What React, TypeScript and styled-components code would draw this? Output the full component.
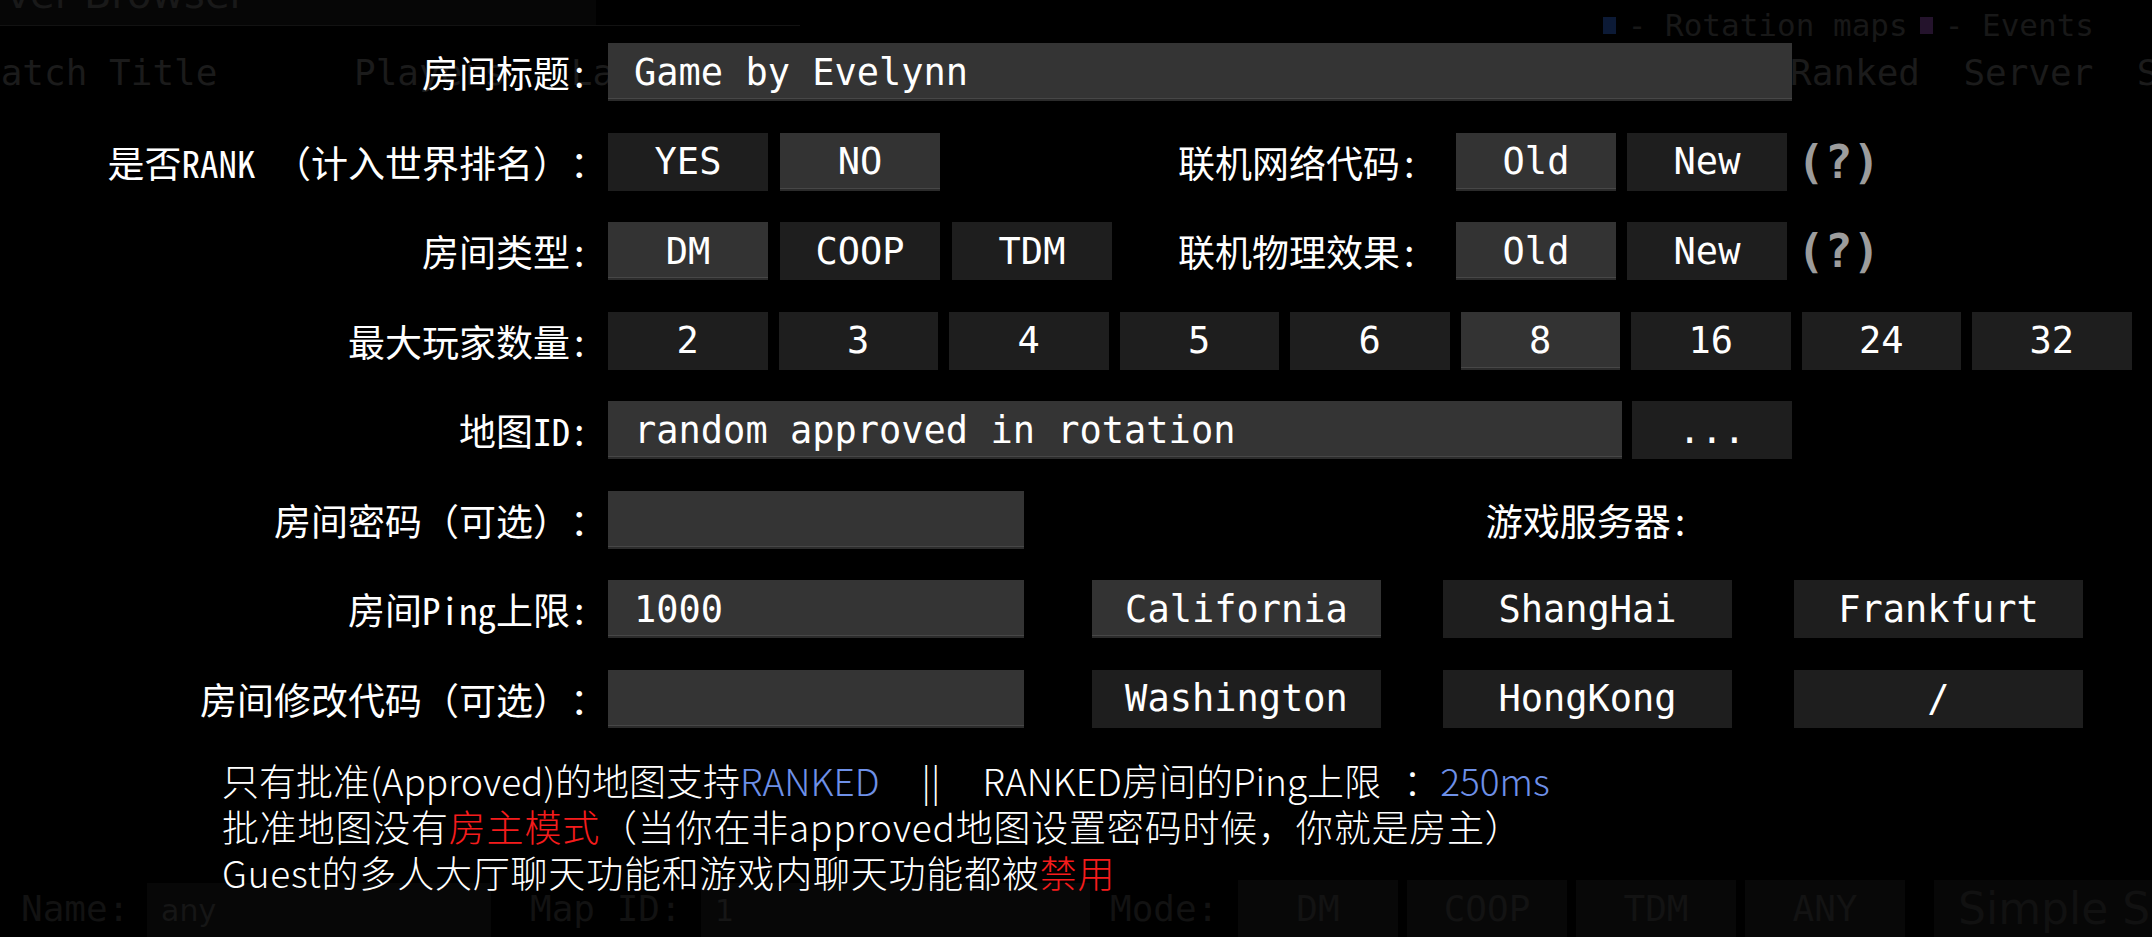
import React from 'react';
import styled, { createGlobalStyle } from 'styled-components';

const mono = `"DejaVu Sans Mono", "Liberation Mono", monospace`;
const cjk = `"Noto Sans CJK SC", "Noto Sans", sans-serif`;
const cjkMono = `"Noto Sans Mono CJK SC", "Noto Sans CJK SC", sans-serif`;
const sans = `"DejaVu Sans", "Noto Sans", sans-serif`;

const GlobalStyle = createGlobalStyle`
  html, body { margin: 0; padding: 0; background: #000; }
  body { width: 2152px; height: 937px; overflow: hidden; }
  #root { width: 2152px; height: 937px; }
`;

const Stage = styled.div`
  position: relative;
  width: 2152px;
  height: 937px;
  overflow: hidden;
  background: #000;
`;

/* ---------- dimmed page behind the dialog ---------- */
const BackPage = styled.div`
  height: 937px;
  display: flex;
  flex-direction: column;
  font-family: ${mono};
  color: #1a1a1a;
`;

const TopBar = styled.div`
  height: 50px;
  display: flex;
  justify-content: space-between;
`;

const TitleBlock = styled.div`
  width: 800px;
  display: flex;
  flex-direction: column;
`;

const TitleTab = styled.div`
  width: 596px;
  height: 25px;
  background: #060606;
  overflow: hidden;
  display: flex;
  align-items: flex-end;
`;

const TitleText = styled.span`
  font-family: ${sans};
  font-size: 40px;
  line-height: 40px;
  margin-bottom: 11px;
  margin-left: -60px;
  color: #191919;
  white-space: nowrap;
`;

const Rule = styled.div`
  height: 1px;
  background: #121212;
`;

const Legend = styled.div`
  display: flex;
  align-items: center;
  gap: 12px;
  margin-right: 58px;
  font-size: 31px;
  color: #181818;
  white-space: pre;
`;

const Swatch = styled.span<{ $c: string }>`
  width: 13px;
  height: 17px;
  background: ${(p) => p.$c};
`;

const HeaderRow = styled.div`
  height: 44px;
  display: flex;
  align-items: center;
  font-size: 36px;
  white-space: pre;
  color: #1b1b1b;
`;

const HeaderCell = styled.span<{ $w: number; $ml?: number }>`
  width: ${(p) => p.$w}px;
  margin-left: ${(p) => p.$ml ?? 0}px;
  flex-shrink: 0;
`;

const Spacer = styled.div`
  flex: 1;
`;

const FilterBar = styled.div`
  height: 57px;
  display: flex;
  align-items: stretch;
  padding-left: 21px;
  font-size: 36px;
  color: #121212;
`;

const FilterLabel = styled.span<{ $w: number; $ml?: number }>`
  width: ${(p) => p.$w}px;
  margin-left: ${(p) => p.$ml ?? 0}px;
  flex-shrink: 0;
  display: flex;
  align-items: center;
`;

const FilterBox = styled.div<{ $w: number }>`
  width: ${(p) => p.$w}px;
  flex-shrink: 0;
  margin-top: 3px;
  background: #070707;
  display: flex;
  align-items: center;
  padding-left: 14px;
  box-sizing: border-box;
  font-family: ${sans};
  font-size: 30px;
  color: #161616;
`;

const ModeGroup = styled.div`
  display: flex;
  gap: 9px;
`;

const ModeBtn = styled.div`
  width: 160px;
  background: #080808;
  display: flex;
  align-items: center;
  justify-content: center;
  color: #131313;
`;

const SimpleBox = styled.div`
  flex: 1;
  margin-left: 29px;
  background: #070707;
  display: flex;
  align-items: center;
  padding-left: 24px;
  font-family: ${sans};
  font-size: 44px;
  color: #111;
  white-space: nowrap;
  overflow: hidden;
`;

/* ---------- dialog ---------- */
const Overlay = styled.div`
  position: absolute;
  inset: 0;
  padding-top: 43px;
  display: flex;
  flex-direction: column;
`;

const Form = styled.div`
  display: flex;
  flex-direction: column;
  gap: 31.5px;
`;

const Row = styled.div`
  height: 58px;
  display: flex;
  align-items: center;
`;

const Label = styled.div`
  width: 607px;
  margin-right: 1px;
  flex-shrink: 0;
  text-align: right;
  font-family: ${cjkMono};
  font-size: 37px;
  text-spacing-trim: space-all;
  color: #fff;
  white-space: pre;
`;

const SubLabel = styled.div<{ $w: number; $mr: number }>`
  width: ${(p) => p.$w}px;
  margin-right: ${(p) => p.$mr}px;
  flex-shrink: 0;
  text-align: right;
  font-family: ${cjkMono};
  font-size: 37px;
  color: #fff;
  white-space: pre;
`;

const TextField = styled.div<{ $w: number }>`
  width: ${(p) => p.$w}px;
  height: 58px;
  flex-shrink: 0;
  box-sizing: border-box;
  padding-left: 26px;
  display: flex;
  align-items: center;
  background: #343434;
  box-shadow: inset 0 -2px 0 #2b2b2b, inset 0 -3px 0 #474747;
  font-family: ${mono};
  font-size: 37px;
  color: #fff;
  white-space: pre;
`;

const Group = styled.div<{ $w?: number; $gap: number; $ml?: number }>`
  display: flex;
  gap: ${(p) => p.$gap}px;
  ${(p) => (p.$w ? `width: ${p.$w}px;` : '')}
  margin-left: ${(p) => p.$ml ?? 0}px;
  flex-shrink: 0;
`;

const Btn = styled.div<{ $on?: boolean; $w?: number }>`
  width: ${(p) => p.$w ?? 160}px;
  height: 58px;
  flex-shrink: 0;
  display: flex;
  align-items: center;
  justify-content: center;
  background: ${(p) => (p.$on ? '#333333' : '#1e1e1e')};
  box-shadow: ${(p) =>
    p.$on ? 'inset 0 -2px 0 #2b2b2b, inset 0 -3px 0 #474747' : 'none'};
  font-family: ${mono};
  font-size: 37px;
  color: #fff;
  white-space: pre;
`;

const Hint = styled.span`
  margin-left: 10px;
  font-family: ${mono};
  font-weight: bold;
  font-size: 46px;
  color: #9c9c9c;
`;

const ServerGrid = styled.div`
  margin-left: 68px;
  display: grid;
  grid-template-columns: repeat(3, 289px);
  column-gap: 62px;
  align-items: center;
`;

const ServerTitle = styled.div`
  grid-column: 2;
  text-align: center;
  font-family: ${cjkMono};
  font-size: 37px;
  color: #fff;
  white-space: nowrap;
`;

const Notes = styled.div`
  margin-top: 29px;
  padding-left: 222px;
  font-family: ${cjk};
  font-weight: 300;
  font-size: 37px;
  line-height: 46px;
  color: #fff;
  white-space: nowrap;
`;

const NoteLine = styled.div<{ $ls: number }>`
  letter-spacing: ${(p) => p.$ls}px;
`;

const NoteColon = styled.span`
  margin-left: 22px;
`;

const Blue = styled.span`
  color: #6e90e8;
`;

const Red = styled.span`
  color: #f51c1c;
`;

const Sep = styled.span`
  margin: 0 42px;
`;

const players = ['2', '3', '4', '5', '6', '8', '16', '24', '32'];

export default function App() {
  return (
    <>
      <GlobalStyle />
      <Stage>
        <BackPage>
          <TopBar>
            <TitleBlock>
              <TitleTab>
                <TitleText>Server Browser</TitleText>
              </TitleTab>
              <Rule />
            </TitleBlock>
            <Legend>
              <Swatch $c="#0c1a36" />
              <span>- Rotation maps</span>
              <Swatch $c="#24132c" />
              <span>- Events</span>
            </Legend>
          </TopBar>
          <HeaderRow>
            <HeaderCell $w={375} $ml={-21}>Match Title</HeaderCell>
            <HeaderCell $w={1436}>Players   Label</HeaderCell>
            <HeaderCell $w={400}>Ranked  Server  Status</HeaderCell>
          </HeaderRow>
          <Spacer />
          <FilterBar>
            <FilterLabel $w={126}>Name:</FilterLabel>
            <FilterBox $w={344}>any</FilterBox>
            <FilterLabel $w={171} $ml={39}>Map ID:</FilterLabel>
            <FilterBox $w={389}>1</FilterBox>
            <FilterLabel $w={128} $ml={20}>Mode:</FilterLabel>
            <ModeGroup>
              <ModeBtn>DM</ModeBtn>
              <ModeBtn>COOP</ModeBtn>
              <ModeBtn>TDM</ModeBtn>
              <ModeBtn>ANY</ModeBtn>
            </ModeGroup>
            <SimpleBox>Simple Search</SimpleBox>
          </FilterBar>
        </BackPage>

        <Overlay>
          <Form>
            <Row>
              <Label>房间标题: </Label>
              <TextField $w={1184}>Game by Evelynn</TextField>
            </Row>
            <Row>
              <Label>是否RANK （计入世界排名）：</Label>
              <Group $w={504} $gap={12}>
                <Btn>YES</Btn>
                <Btn $on>NO</Btn>
              </Group>
              <SubLabel $w={325} $mr={19}>联机网络代码: </SubLabel>
              <Group $gap={11}>
                <Btn $on>Old</Btn>
                <Btn>New</Btn>
              </Group>
              <Hint>(?)</Hint>
            </Row>
            <Row>
              <Label>房间类型: </Label>
              <Group $w={504} $gap={12}>
                <Btn $on>DM</Btn>
                <Btn>COOP</Btn>
                <Btn>TDM</Btn>
              </Group>
              <SubLabel $w={325} $mr={19}>联机物理效果: </SubLabel>
              <Group $gap={11}>
                <Btn $on>Old</Btn>
                <Btn>New</Btn>
              </Group>
              <Hint>(?)</Hint>
            </Row>
            <Row>
              <Label>最大玩家数量: </Label>
              <Group $gap={11}>
                {players.map((n) => (
                  <Btn key={n} $w={159.5} $on={n === '8'}>
                    {n}
                  </Btn>
                ))}
              </Group>
            </Row>
            <Row>
              <Label>地图ID: </Label>
              <TextField $w={1014}>random approved in rotation</TextField>
              <Group $gap={0} $ml={10}>
                <Btn>...</Btn>
              </Group>
            </Row>
            <Row>
              <Label>房间密码（可选）：</Label>
              <TextField $w={416} />
              <ServerGrid>
                <ServerTitle>游戏服务器:</ServerTitle>
              </ServerGrid>
            </Row>
            <Row>
              <Label>房间Ping上限: </Label>
              <TextField $w={416}>1000</TextField>
              <ServerGrid>
                <Btn $w={289} $on>California</Btn>
                <Btn $w={289}>ShangHai</Btn>
                <Btn $w={289}>Frankfurt</Btn>
              </ServerGrid>
            </Row>
            <Row>
              <Label>房间修改代码（可选）：</Label>
              <TextField $w={416} />
              <ServerGrid>
                <Btn $w={289}>Washington</Btn>
                <Btn $w={289}>HongKong</Btn>
                <Btn $w={289}>/</Btn>
              </ServerGrid>
            </Row>
          </Form>
          <Notes>
            <NoteLine $ls={0}>
              只有批准(Approved)的地图支持<Blue>RANKED</Blue>
              <Sep>||</Sep>RANKED房间的Ping上限<NoteColon>：</NoteColon>
              <Blue>250ms</Blue>
            </NoteLine>
            <NoteLine $ls={0.8}>
              批准地图没有<Red>房主模式</Red>（当你在非approved地图设置密码时候，你就是房主）
            </NoteLine>
            <NoteLine $ls={0.8}>
              Guest的多人大厅聊天功能和游戏内聊天功能都被<Red>禁用</Red>
            </NoteLine>
          </Notes>
        </Overlay>
      </Stage>
    </>
  );
}
